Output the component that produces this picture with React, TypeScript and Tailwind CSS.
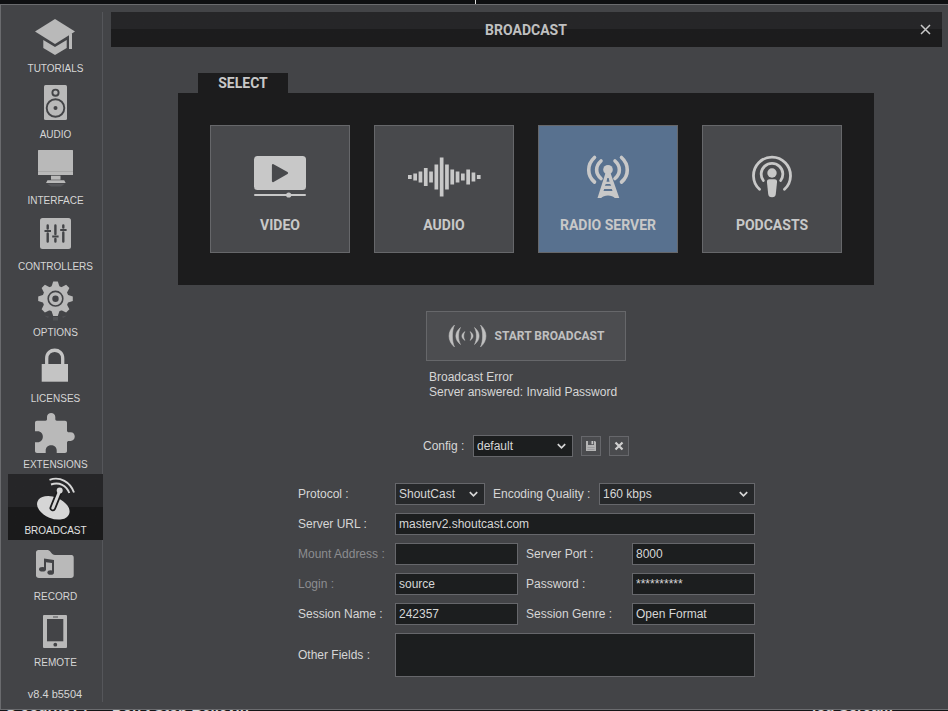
import type { ReactNode } from "react";

const DARK = "#434447";

function NavIcon({ children }: { children: ReactNode }) {
  return (
    <svg width="45" height="48" viewBox="0 0 45 48" fill="#b9b9b9" className="block shrink-0" aria-hidden="true">
      {children}
    </svg>
  );
}

const navItems: { label: string; icon: ReactNode }[] = [
  {
    label: "TUTORIALS",
    icon: (
      <>
        <path d="M22 7 42 19.500 22 32 2 19.500Z" />
        <path d="M10.300 28 22 35 33.700 28V36L22 43 10.300 36Z" />
        <path d="M36 22.500 39 21V37H36Z" />
      </>
    ),
  },
  {
    label: "AUDIO",
    icon: (
      <>
        <rect x="11" y="7" width="23" height="35" rx="1.500" />
        <circle cx="22.500" cy="14.700" r="3.100" fill="none" stroke={DARK} strokeWidth="1.900" />
        <circle cx="22.500" cy="30" r="8.800" fill="none" stroke={DARK} strokeWidth="1.900" />
        <circle cx="22.500" cy="30" r="2" fill={DARK} />
      </>
    ),
  },
  {
    label: "INTERFACE",
    icon: (
      <>
        <rect x="5" y="6" width="35" height="25" rx="0.500" />
        <path d="M5 27.500H40" stroke="#a2a2a2" strokeWidth="0.800" />
        <rect x="18" y="31.700" width="9.500" height="4" />
        <path d="M14.500 36.200H31.200L32.700 39H13Z" />
        <path d="M14 39.800H32L28 42.500H18Z" fill="#55565a" />
      </>
    ),
  },
  {
    label: "CONTROLLERS",
    icon: (
      <>
        <rect x="7" y="8" width="31" height="31" rx="2.500" />
        <path
          d="M14.700 15.500V18.500M14.700 23.500V31.500M22.400 15.500V24M22.400 29V31.500M30.300 15.500V17.500M30.300 22.500V31.500"
          stroke={DARK}
          strokeWidth="2.400"
          strokeLinecap="round"
        />
        <path d="M11.500 21H18M19.200 26.500H25.600M27.200 20H33.600" stroke={DARK} strokeWidth="2" />
      </>
    ),
  },
  {
    label: "OPTIONS",
    icon: (
      <>
        <path d="M20 41H25V44.500H20ZM11 39.500 16 40.500 15 42ZM34 39.500 29 40.500 30 42Z" fill="#515255" />
        <circle cx="22.500" cy="22.700" r="13" />
        {[0, 45, 90, 135, 180, 225, 270, 315].map((a) => (
          <path key={a} d="M18.200 11.500 20.200 5.400H24.800L26.800 11.500Z" transform={`rotate(${a} 22.500 22.700)`} />
        ))}
        <circle cx="22.500" cy="22.700" r="7.300" fill="none" stroke={DARK} strokeWidth="1.600" />
        <circle cx="22.500" cy="22.700" r="3.200" fill={DARK} />
      </>
    ),
  },
  {
    label: "LICENSES",
    icon: (
      <g fill="#c4c4c4">
        <rect x="8.700" y="22" width="26.300" height="17.700" />
        <path d="M13.700 23V16.500C13.700 5.500 29.700 5.500 29.700 16.500V23" fill="none" stroke="#c4c4c4" strokeWidth="3.300" />
      </g>
    ),
  },
  {
    label: "EXTENSIONS",
    icon: (
      <path d="M4 12.700H12.500C13.500 12.700 14 12 14 11V9C14 3.600 22.300 3.600 22.300 9V11C22.300 12 22.800 12.700 23.800 12.700H32C33.200 12.700 34 13.500 34 14.700V22.500C34 23.600 34.800 24.300 35.800 24.300H37.500C43.200 24.300 43.200 33 37.500 33H35.800C34.800 33 34 33.700 34 34.700V43C34 44.200 33.200 45 32 45H23.700V42.500C23.700 35.500 12.700 35.500 12.700 42.500V45H4C2.800 45 2 44.200 2 43V34.300H4.500C11.700 34.300 11.700 23.300 4.500 23.300H2V14.700C2 13.500 2.800 12.700 4 12.700Z" />
    ),
  },
  {
    label: "BROADCAST",
    icon: (
      <g fill="#d6d6d6">
        <ellipse cx="20.300" cy="33.800" rx="17" ry="10.600" transform="rotate(22 20.300 33.800)" />
        <path d="M19.800 34 26.700 17" stroke="#1c1c1d" strokeWidth="6.500" strokeLinecap="round" />
        <path d="M19.800 34 26.700 17" stroke="#d6d6d6" strokeWidth="3" strokeLinecap="round" />
        <circle cx="26.700" cy="16.500" r="3" />
        <g fill="none" stroke="#d6d6d6" strokeWidth="1.900">
          <path d="M16.500 5.800C27 2 37.500 8 41 18.500" />
          <path d="M18 10.500C26 7.500 33.500 11.500 36.300 19" />
        </g>
      </g>
    ),
  },
  {
    label: "RECORD",
    icon: (
      <>
        <path d="M5.500 10H14.500C17.500 10 18.500 15 22 15H38.500C40 15 40.700 16 40.700 17.500V35.500C40.700 37 39.500 38 38 38H6C4.200 38 3 37 3 35.500V12.500C3 11 4 10 5.500 10Z" />
        <g fill={DARK}>
          <path d="M11 18.500 21 20V32H19V23L13 22.200V29H11Z" />
          <ellipse cx="9.500" cy="29.300" rx="3.500" ry="2.300" />
          <ellipse cx="17.700" cy="32.500" rx="3.300" ry="2.300" />
        </g>
      </>
    ),
  },
  {
    label: "REMOTE",
    icon: (
      <>
        <rect x="10" y="9" width="24" height="33" rx="1" />
        <rect x="14" y="13" width="16.300" height="22.300" fill={DARK} />
        <circle cx="22.300" cy="38.700" r="1.900" fill={DARK} />
        <path d="M20 11H25" stroke={DARK} strokeWidth="0.900" />
      </>
    ),
  },
];

const bars = [4, 7, 11, 18, 11, 25, 39, 25, 15, 11, 7, 15, 9, 4];

const sources: { label: string; icon: ReactNode }[] = [
  {
    label: "VIDEO",
    icon: (
      <>
        <rect x="14" y="3" width="52" height="34" rx="3.500" />
        <path d="M33 12.200 47 20 33 28Z" fill="#48494c" stroke="#48494c" strokeWidth="2.200" strokeLinejoin="round" />
        <path d="M15 42H65" stroke="#c8c8c8" strokeWidth="2" strokeLinecap="round" />
        <circle cx="48.700" cy="42" r="2.600" />
      </>
    ),
  },
  {
    label: "AUDIO",
    icon: (
      <>
        {bars.map((h, i) => (
          <rect key={i} x={4 + i * 5.3} y={24 - h / 2} width="3.700" height={h} />
        ))}
      </>
    ),
  },
  {
    label: "RADIO SERVER",
    icon: (
      <>
        <circle cx="40" cy="16.700" r="4.800" />
        <path
          fillRule="evenodd"
          d="M37.500 20H42.500L51.300 45H46.800C44.500 41.500 35.500 41.500 33.200 45H29.500ZM39.300 25 38.500 28.700H41.500L40.700 25ZM37.800 31 36.800 32.800H43.200L42.200 31ZM36.200 36 35.500 38H44.500L43.800 36Z"
        />
        <g fill="none" stroke="#c8c8c8" strokeWidth="3.600" strokeLinecap="round">
          <path d="M33 8C27.200 13 27.200 20.500 33 25.500M47 8C52.800 13 52.800 20.500 47 25.500" />
          <path d="M26.500 4.500C18.800 11.500 18.800 22.500 26.500 29M53.500 4.500C61.200 11.500 61.200 22.500 53.500 29" />
        </g>
      </>
    ),
  },
  {
    label: "PODCASTS",
    icon: (
      <>
        <circle cx="40" cy="20" r="4.700" />
        <path d="M37.500 26.300H42.500C44.500 26.300 45.200 27.500 45 29.500L43.800 41C43.500 43.200 42.500 44.200 40 44.200S36.500 43.200 36.200 41L35 29.500C34.800 27.500 35.500 26.300 37.500 26.300Z" />
        <g fill="none" stroke="#c8c8c8" strokeWidth="2.800" strokeLinecap="round">
          <path d="M27.500 36.300A18.500 18.500 0 1 1 52.500 36.300" />
          <path d="M31.300 27.500A10.800 10.800 0 1 1 48.700 27.500" />
        </g>
      </>
    ),
  },
];

const fieldClass =
  "block h-[22px] w-full min-w-0 appearance-none rounded-none border border-[#66676b] bg-[#1c1e1f] px-[3px] text-[12px] leading-[20px] text-[#d6d6d6] outline-none";

function Dropdown({ id, value, dark = false }: { id: string; value: string; dark?: boolean }) {
  return (
    <div className="relative w-full">
      <select
        id={id}
        defaultValue={value}
        className={`block h-[22px] w-full appearance-none rounded-none border border-[#66676b] px-[3px] text-[12px] leading-[20px] text-[#d6d6d6] outline-none ${dark ? "bg-[#1c1e1f]" : "bg-[#26282a]"}`}
      >
        <option>{value}</option>
      </select>
      <svg width="9" height="7" viewBox="0 0 9 7" className="pointer-events-none absolute top-2 right-[7px]" aria-hidden="true">
        <path d="M0.800 1.200 4.500 4.900 8.200 1.200" fill="none" stroke="#d6d6d6" strokeWidth="1.700" />
      </svg>
    </div>
  );
}

function TextField({ id, label, value, type = "text", muted = false, second = false, wide = false }: {
  id: string; label: string; value: string; type?: string; muted?: boolean; second?: boolean; wide?: boolean;
}) {
  return (
    <>
      <label htmlFor={id} className={`${muted ? "text-[#8c8d90]" : ""} ${second ? "pl-2" : ""}`}>
        {label}
      </label>
      <input id={id} type={type} defaultValue={value} className={`${fieldClass} ${wide ? "col-span-3" : ""}`} />
    </>
  );
}

export default function App() {
  return (
    <div className="flex min-h-screen flex-col bg-[#141517] font-['Liberation_Sans',Arial,sans-serif] text-[12px] text-[#d6d6d6]">
      <div className="flex h-1 justify-center bg-[#0e0f11] pl-[3px]">
        <div className="w-px bg-[#e0e0e0]" />
      </div>

      <div className="flex flex-1 border border-r-0 border-[#6a6b6e] bg-[#434447] pt-[7px] pr-[6px] pb-[7px] pl-[7px]">
        <nav className="flex w-[95px] shrink-0 flex-col border-r border-[#55565a]">
          {navItems.map((item) => (
            <button
              key={item.label}
              type="button"
              className={`-mr-px flex h-[66px] flex-col items-center text-[10px] leading-[18px] ${
                item.label === "BROADCAST" ? "bg-linear-to-b from-[#262628] from-50% to-[#1a1a1b] to-50% text-[#e2e2e2]" : ""
              }`}
            >
              <NavIcon>{item.icon}</NavIcon>
              {item.label}
            </button>
          ))}
          <p className="mt-[14px] text-center text-[11px] leading-[16px]">v8.4 b5504</p>
        </nav>

        <main className="ml-2 min-w-0 flex-1">
          <header className="flex h-[35px] w-full items-center bg-linear-to-b from-[#262628] from-50% to-[#1c1c1d] to-50% px-[10px]">
            <h1 className="flex-1 pl-3 text-center font-[Roboto,sans-serif] text-[14px] leading-[22px] font-bold text-[#c0c0c0]">BROADCAST</h1>
            <button type="button" aria-label="Close" className="flex size-[13px] items-center justify-center">
              <svg width="11" height="11" viewBox="0 0 11 11">
                <path d="M1 1 10 10M10 1 1 10" stroke="#c8c8c8" strokeWidth="1.500" />
              </svg>
            </button>
          </header>

          <div className="flex flex-col items-center pr-px">
            <section className="mt-[26px] flex flex-col items-start">
              <h2 className="ml-5 h-5 w-[90px] bg-[#1c1c1d] text-center font-[Roboto,sans-serif] text-[14px] leading-[21px] font-bold text-[#c8c8c8]">
                SELECT
              </h2>
              <div className="grid grid-cols-4 gap-6 bg-[#1c1c1d] p-8">
                {sources.map((s) => (
                  <button
                    key={s.label}
                    type="button"
                    className={`flex h-32 w-[140px] flex-col items-center border border-[#66676a] pt-[27px] font-[Roboto,sans-serif] text-[14px] leading-[21px] font-bold text-[#c8c8c8] ${
                      s.label === "RADIO SERVER" ? "bg-[#58718f]" : "bg-[#48494c]"
                    }`}
                  >
                    <svg width="80" height="48" viewBox="0 0 80 48" fill="#c8c8c8" className="mb-[14px] block shrink-0" aria-hidden="true">
                      {s.icon}
                    </svg>
                    {s.label}
                  </button>
                ))}
              </div>
            </section>

            <section className="mt-[26px] w-[200px]">
              <button
                type="button"
                className="flex h-[50px] w-full items-center justify-center gap-[7px] border border-[#66676a] bg-[#4c4d50] font-[Roboto,sans-serif] text-[12px] font-bold whitespace-nowrap text-[#c0c0c0]"
              >
                <svg width="40" height="24" viewBox="0 0 40 24" fill="#c0c0c0" aria-hidden="true">
                  <path d="M6.500 1C-0.800 7 -0.800 17 6.500 23C3.700 17 3.700 7 6.500 1Z" stroke="#c0c0c0" strokeWidth="0.500" />
                  <path d="M12.500 3.500C6.300 8.500 6.300 15.500 12.500 20.500C9.900 15.500 9.900 8.500 12.500 3.500Z" stroke="#c0c0c0" strokeWidth="0.500" />
                  <path d="M17 7.500C12.800 10.200 12.800 13.800 17 16.500C15.300 13.800 15.300 10.200 17 7.500Z" stroke="#c0c0c0" strokeWidth="0.400" />
                  <path d="M32.500 1C39.800 7 39.800 17 32.500 23C35.300 17 35.300 7 32.500 1Z" stroke="#c0c0c0" strokeWidth="0.500" />
                  <path d="M26.500 3.500C32.700 8.500 32.700 15.500 26.500 20.500C29.100 15.500 29.100 8.500 26.500 3.500Z" stroke="#c0c0c0" strokeWidth="0.500" />
                  <path d="M22 7.500C26.200 10.200 26.200 13.800 22 16.500C23.700 13.800 23.700 10.200 22 7.500Z" stroke="#c0c0c0" strokeWidth="0.400" />
                </svg>
                START BROADCAST
              </button>
              <p className="mt-[9px] pl-[3px] leading-[15px] whitespace-nowrap">
                Broadcast Error
                <br />
                Server answered: Invalid Password
              </p>
            </section>

            <div className="mt-[35px] flex w-[206px] items-center gap-2">
              <div className="flex flex-1 items-center">
                <label htmlFor="config" className="w-[50px] shrink-0">Config :</label>
                <Dropdown id="config" value="default" dark />
              </div>
              <button type="button" aria-label="Save" className="flex size-5 items-center justify-center border border-[#66676b] bg-[#4a4b4e]">
                <svg width="12" height="12" viewBox="0 0 12 12">
                  <path d="M1 1H10L11 2V11H1Z" fill="#b4b4b4" />
                  <path d="M3 1H9V5H3Z" fill="#55565a" />
                  <path d="M6.500 1H8.200V4.200H6.500Z" fill="#c4c4c4" />
                  <path d="M2.500 7.500H9.500M2.500 9.500H9.500" stroke="#98999c" strokeWidth="0.900" />
                </svg>
              </button>
              <button type="button" aria-label="Delete" className="flex size-5 items-center justify-center border border-[#66676b] bg-[#4a4b4e]">
                <svg width="12" height="12" viewBox="0 0 12 12">
                  <path d="M2.500 2.500 9.500 9.500M9.500 2.500 2.500 9.500" stroke="#cfcfcf" strokeWidth="2.200" />
                </svg>
              </button>
            </div>

            <form className="mt-[26px] grid grid-cols-[97px_123px_114px_123px] items-center gap-y-2 pl-px">
              <label htmlFor="protocol">Protocol :</label>
              <div className="col-span-3 flex items-center">
                <div className="w-[90px] shrink-0">
                  <Dropdown id="protocol" value="ShoutCast" />
                </div>
                <label htmlFor="quality" className="w-[114px] shrink-0 pl-2">Encoding Quality :</label>
                <Dropdown id="quality" value="160 kbps" />
              </div>
              <TextField id="url" label="Server URL :" value="masterv2.shoutcast.com" wide />
              <TextField id="mount" label="Mount Address :" value="" muted />
              <TextField id="port" label="Server Port :" value="8000" second />
              <TextField id="login" label="Login :" value="source" muted />
              <TextField id="password" label="Password :" value="**********" second />
              <TextField id="session" label="Session Name :" value="242357" />
              <TextField id="genre" label="Session Genre :" value="Open Format" second />
              <label htmlFor="other">Other Fields :</label>
              <textarea
                id="other"
                className="col-span-3 block h-11 resize-none border border-[#66676b] bg-[#1c1e1f] px-[3px] text-[12px] text-[#d6d6d6] outline-none"
              />
            </form>
          </div>
        </main>
      </div>

      <div className="flex h-[2px] items-end overflow-hidden bg-[#141517] pl-[5px] text-[15px] leading-3 font-bold" aria-hidden="true">
        <span className="w-[107px] shrink-0">Q Journey ,</span>
        <span className="flex-1">Don't Stop Believin'</span>
        <span className="w-[136px] shrink-0">log Scream</span>
      </div>
    </div>
  );
}
